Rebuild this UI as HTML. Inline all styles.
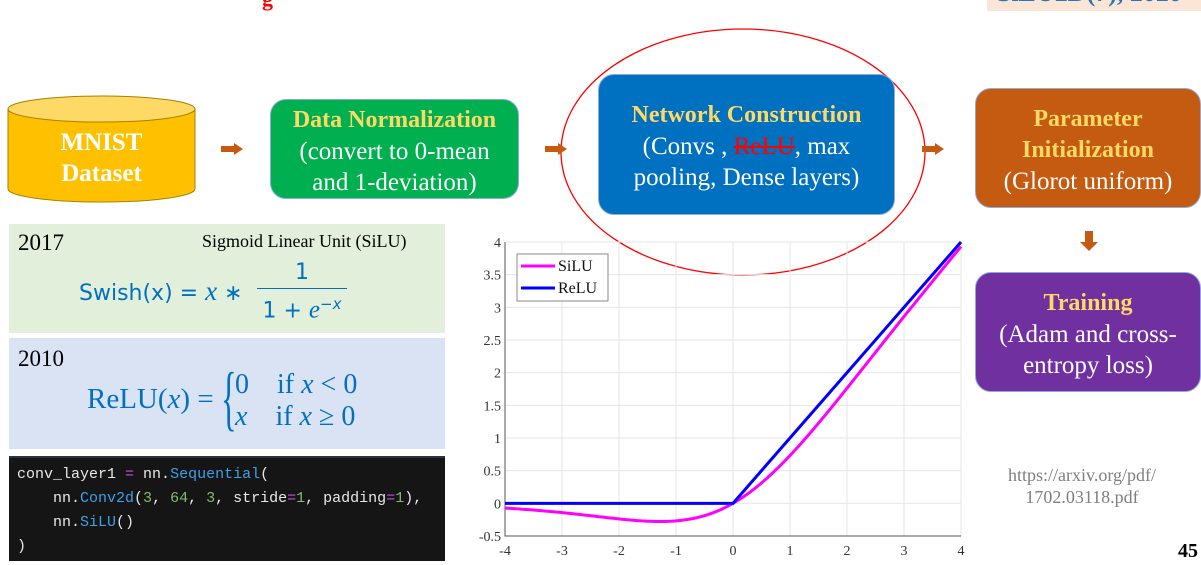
<!DOCTYPE html>
<html><head><meta charset="utf-8"><style>
*{margin:0;padding:0;box-sizing:border-box}
body{width:1201px;height:565px;background:#fff;position:relative;overflow:hidden;font-family:"Liberation Serif",serif}
.box{position:absolute;border-radius:16px;color:#fff;text-align:center;font-size:25px;line-height:31px;display:flex;flex-direction:column;justify-content:center;border:1px solid #8eaadb;white-space:nowrap;padding-top:4px}
.t{color:#ffd966;font-weight:bold;font-size:24px}
.arr{position:absolute;width:22px;height:12px}
.panel{position:absolute;left:9px;width:436px}
.code{position:absolute;left:9px;top:456px;width:436px;height:105px;background:#151515;border-top:2px solid #2a3440;font-family:"Liberation Mono",monospace;font-size:15px;color:#e8e8e8;line-height:24px;padding:5px 0 0 8px;white-space:pre}
.k{color:#3fa0e8}.n{color:#7fbf6a}.p{color:#c050e0}
</style></head><body>
<div style="position:absolute;left:262px;top:-14px;color:#f00;font-size:22px;font-weight:bold">g</div>
<div style="position:absolute;left:987px;top:0;width:214px;height:11px;background:#fbe5d6;overflow:hidden"><div style="color:#2e75b6;font-size:26px;margin-top:-22px;padding-left:10px;font-weight:bold">SiLU2D(7), 2020</div></div>

<svg style="position:absolute;left:0;top:0" width="1201" height="565">
<path d="M8 109 V189 A93.5 13 0 0 0 195 189 V109 Z" fill="#ffc000" stroke="#a68000" stroke-width="1"/>
<ellipse cx="101.5" cy="109" rx="93.5" ry="13" fill="#ffd966" stroke="#a68000" stroke-width="1"/>
<ellipse cx="743" cy="152" rx="182" ry="123" fill="none" stroke="#f00" stroke-width="1.3"/>
</svg>
<div style="position:absolute;left:8px;top:127px;width:187px;text-align:center;color:#fff;font-weight:bold;font-size:25px;line-height:31px">MNIST<br>Dataset</div>

<svg class="arr" style="left:221px;top:143px" viewBox="0 0 22 12"><path d="M0 3H13V0L22 6L13 12V9H0Z" fill="#c55a11"/></svg>
<svg class="arr" style="left:545px;top:143px" viewBox="0 0 22 12"><path d="M0 3H13V0L22 6L13 12V9H0Z" fill="#c55a11"/></svg>
<svg class="arr" style="left:922px;top:143px" viewBox="0 0 22 12"><path d="M0 3H13V0L22 6L13 12V9H0Z" fill="#c55a11"/></svg>
<svg style="position:absolute;left:1080px;top:231px" width="18" height="20" viewBox="0 0 18 20"><path d="M5 0H13V11H18L9 20L0 11H5Z" fill="#c55a11"/></svg>

<div class="box" style="left:270px;top:99px;width:249px;height:100px;background:#00b050"><span class="t">Data Normalization</span>(convert to 0-mean<br>and 1-deviation)</div>
<div class="box" style="left:598px;top:74px;width:297px;height:141px;background:#0070c0"><span class="t">Network Construction</span><span>(Convs , <s style="color:#f00;text-decoration-color:#f00">ReLU</s>, max</span>pooling, Dense layers)</div>
<div class="box" style="left:975px;top:88px;width:226px;height:120px;background:#c55a11"><span class="t">Parameter<br>Initialization</span>(Glorot uniform)</div>
<div class="box" style="left:975px;top:272px;width:226px;height:120px;background:#7030a0"><span class="t">Training</span>(Adam and cross-<br>entropy loss)</div>

<div class="panel" style="top:224px;height:109px;background:#e2efda">
 <div style="position:absolute;left:9px;top:6px;font-size:23px">2017</div>
 <div style="position:absolute;left:193px;top:7px;font-size:18px">Sigmoid Linear Unit (SiLU)</div>
 <div style="position:absolute;left:70px;top:52px;color:#0070c0;font-family:'DejaVu Sans',sans-serif;font-size:22px">Swish(x) = <i style="font-family:'Liberation Serif',serif;font-size:27px">x</i> ∗</div>
 <div style="position:absolute;left:248px;top:34px;width:90px;text-align:center;color:#0070c0;font-family:'DejaVu Sans',sans-serif;font-size:22px;line-height:30px"><div style="border-bottom:1.5px solid #0070c0">1</div><div>1 + <i style="font-family:'Liberation Serif',serif;font-size:25px">e</i><sup style="font-size:15px">−<i>x</i></sup></div></div>
</div>
<div class="panel" style="top:338px;height:111px;background:#dae3f3">
 <div style="position:absolute;left:9px;top:8px;font-size:23px">2010</div>
 <div style="position:absolute;left:78px;top:45px;color:#0070c0;font-size:29px">ReLU(<i>x</i>) =</div>
 <div style="position:absolute;left:212px;top:22px;color:#0070c0;font-size:72px;line-height:76px;transform:scaleX(.45);transform-origin:left">{</div>
 <div style="position:absolute;left:226px;top:31px;color:#0070c0;font-size:28px;line-height:32px;white-space:pre">0    if <i>x</i> &lt; 0<br><i>x</i>    if <i>x</i> ≥ 0</div>
</div>
<div class="code">conv_layer1 <span class="p">=</span> nn.<span class="k">Sequential</span>(
    nn.<span class="k">Conv2d</span>(<span class="n">3</span>, <span class="n">64</span>, <span class="n">3</span>, stride<span class="p">=</span><span class="n">1</span>, padding<span class="p">=</span><span class="n">1</span>),
    nn.<span class="k">SiLU</span>()
)</div>

<svg id="ch" style="position:absolute;left:460px;top:225px" width="520" height="340" font-family="Liberation Serif" font-size="14" fill="#333"></svg>
<script>
(function(){
var s=document.getElementById('ch'),h='';
function X(x){return 45+(x+4)*57}function Y(y){return 17+(4-y)*65.33}
for(var i=-4;i<=4;i++){h+='<line x1="'+X(i)+'" y1="17" x2="'+X(i)+'" y2="311" stroke="#e6e6e6"/>';h+='<text x="'+X(i)+'" y="330" text-anchor="middle">'+i+'</text>';}
for(var j=-0.5;j<=4;j+=0.5){h+='<line x1="45" y1="'+Y(j)+'" x2="501" y2="'+Y(j)+'" stroke="#e6e6e6"/>';h+='<text x="41" y="'+(Y(j)+5)+'" text-anchor="end">'+j+'</text>';}
h+='<path d="M45 17V311H501" fill="none" stroke="#555"/>';
var d='';for(var x=-4;x<=4.001;x+=0.05){var y=x/(1+Math.exp(-x));d+=(d?'L':'M')+X(x).toFixed(1)+' '+Y(y).toFixed(1);}
h+='<path d="'+d+'" fill="none" stroke="#f0f" stroke-width="3"/>';
h+='<path d="M'+X(-4)+' '+Y(0)+'H'+X(0)+'L'+X(4)+' '+Y(4)+'" fill="none" stroke="#00f" stroke-width="3"/>';
h+='<rect x="57" y="29" width="91" height="47" fill="#fff" stroke="#888"/><line x1="61" y1="41" x2="95" y2="41" stroke="#f0f" stroke-width="3"/><line x1="61" y1="63" x2="95" y2="63" stroke="#00f" stroke-width="3"/><text x="98" y="46" font-size="16" fill="#111">SiLU</text><text x="98" y="68" font-size="16" fill="#111">ReLU</text>';
s.innerHTML=h;})();
</script>

<div style="position:absolute;left:982px;top:464px;width:200px;text-align:center;color:#7f7f7f;font-size:18px;line-height:22px">https://arxiv.org/pdf/<br>1702.03118.pdf</div>
<div style="position:absolute;left:1178px;top:540px;font-weight:bold;font-size:20px">45</div>
</body></html>
